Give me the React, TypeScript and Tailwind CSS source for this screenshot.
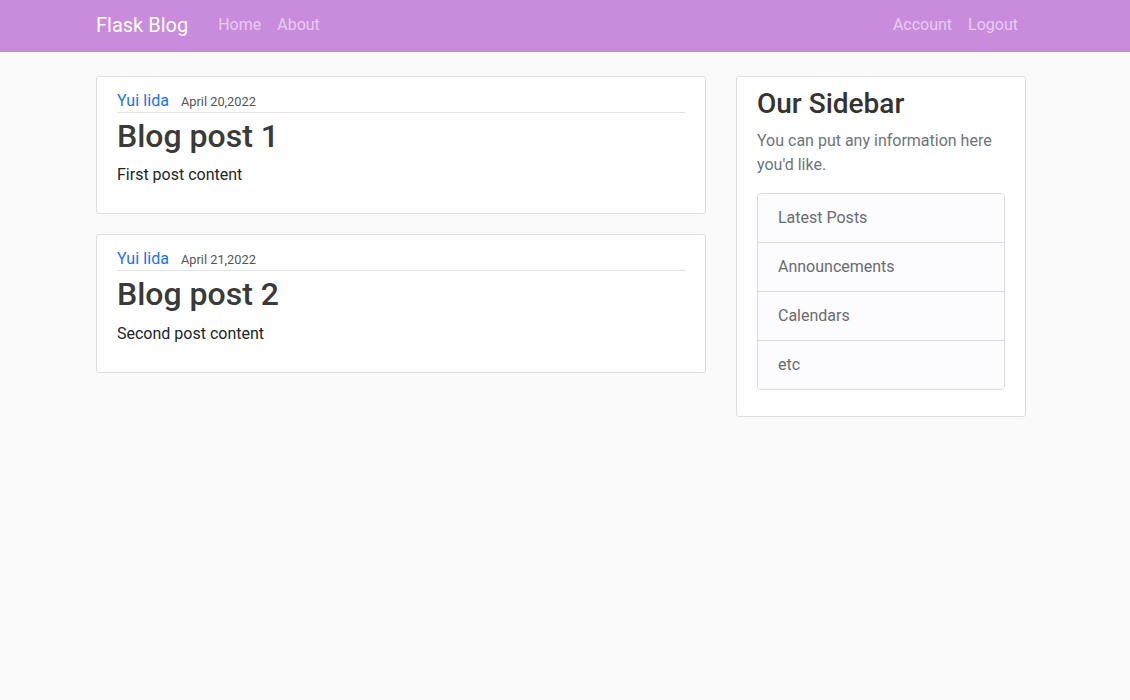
const posts = [
  { author: "Yui Iida", date: "April 20,2022", title: "Blog post 1", content: "First post content" },
  { author: "Yui Iida", date: "April 21,2022", title: "Blog post 2", content: "Second post content" },
];

const sidebarLinks = ["Latest Posts", "Announcements", "Calendars", "etc"];

const Navbar = () => (
  <header className="h-[52px] bg-[#c98bdc]">
    <div className="ml-[96px] flex h-full w-[930px] items-center pb-0.5">
      <a className="text-[20px] text-white">Flask Blog</a>
      <nav className="ml-[30px] flex gap-4 text-[16px] text-white/55">
        <a>Home</a>
        <a>About</a>
      </nav>
      <nav className="ml-auto mr-2 flex gap-4 text-[16px] text-white/55">
        <a>Account</a>
        <a>Logout</a>
      </nav>
    </div>
  </header>
);

const Article = ({ author, date, title, content }: (typeof posts)[number]) => (
  <article className="mb-5 rounded-[3px] border border-[#ddd] bg-white px-5 py-2.5">
    <div className="mb-1 flex h-[26px] items-baseline border-b border-[#e3e3e3] pt-[2px] leading-6">
      <a className="mr-3 text-[16px] text-[#1a73e8]">{author}</a>
      <small className="text-[12.8px] text-[#555]">{date}</small>
    </div>
    <h2 className="mb-2 text-[32px] font-medium leading-[1.2] text-[#3a3a3a]">{title}</h2>
    <p className="mb-4 text-[16px] leading-6 text-[#212529]">{content}</p>
  </article>
);

export default function App() {
  return (
    <div className="min-h-[700px] bg-[#fafafa] font-['Roboto',sans-serif]">
      <Navbar />
      <main className="ml-[96px] mt-6 flex w-[930px] items-start gap-[30px]">
        <div className="w-[610px]">
          {posts.map((p) => (
            <Article key={p.title} {...p} />
          ))}
        </div>
        <aside className="w-[290px] rounded-[3px] border border-[#ddd] bg-white px-5 py-2.5">
          <h3 className="mb-2 text-[28px] font-medium leading-[1.2] text-[#333]">Our Sidebar</h3>
          <p className="mb-4 text-[16px] leading-6 text-[#6c757d]">
            You can put any information here you'd like.
          </p>
          <ul className="mb-4 overflow-hidden rounded-[4px] border border-[#dcdcdf]">
            {sidebarLinks.map((l, i) => (
              <li
                key={l}
                className={`bg-[#fcfcfe] px-5 py-3 text-[16px] leading-6 text-[#6b6b70] ${
                  i > 0 ? "border-t border-[#dcdcdf]" : ""
                }`}
              >
                {l}
              </li>
            ))}
          </ul>
        </aside>
      </main>
    </div>
  );
}
